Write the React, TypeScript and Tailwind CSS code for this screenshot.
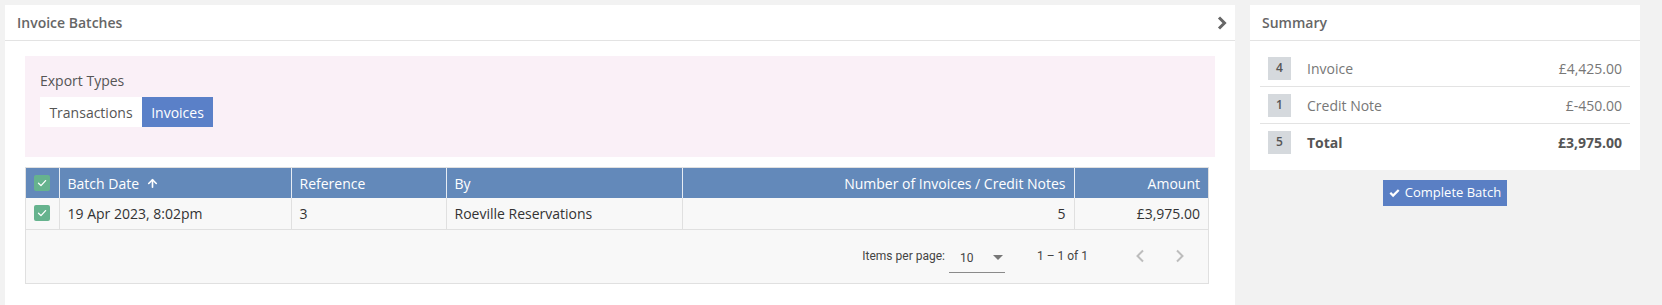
import React from 'react';
import { ArrowUp } from 'lucide-react';

const summaryRows = [
  { count: 4, label: 'Invoice', amount: '£4,425.00' },
  { count: 1, label: 'Credit Note', amount: '£-450.00' },
];

const Check = () => (
  <span className="w-4 h-4 rounded-[2px] bg-[#66b38e] flex items-center justify-center">
    <svg width="12" height="12" viewBox="0 0 12 12" fill="none">
      <path d="M2.5 6.2 L5 8.6 L9.6 3.6" stroke="#fff" strokeWidth="1.3" strokeLinecap="round" strokeLinejoin="round" />
    </svg>
  </span>
);

const App: React.FC = () => {
  return (
    <div className="w-full h-[305px] bg-[#f2f2f2] flex gap-[15px] pl-[5px] pt-[5px] overflow-hidden font-['Open_Sans',sans-serif]">
      {/* Invoice batches panel */}
      <div className="w-[1230px] h-[300px] bg-white flex flex-col shrink-0">
        <div className="h-[36px] border-b border-[#e3e3e3] flex items-center justify-between pl-[12px] pr-[8px]">
          <span className="text-[14px] font-semibold text-[#666]">Invoice Batches</span>
          <svg width="10" height="14" viewBox="0 0 10 14" fill="none">
            <path d="M2 1.5 L7.5 7 L2 12.5" stroke="#666" strokeWidth="3" />
          </svg>
        </div>

        <div className="pl-[20px] pt-[15px]">
          <div className="w-[1190px] h-[101px] bg-[#faf0f7] pl-[15px] pt-[15px]">
            <div className="text-[14px] leading-[20px] text-[#555]">Export Types</div>
            <div className="flex mt-[6px]">
              <button className="w-[102px] h-[30px] bg-white text-[14px] text-[#555]">Transactions</button>
              <button className="w-[71px] h-[30px] bg-[#5a80c8] text-[14px] text-white">Invoices</button>
            </div>
          </div>

          <div className="mt-[10px] w-[1184px] border border-[#e0e0e0] bg-[#f8f8f8] text-[14px]">
            <table className="w-full border-collapse table-fixed">
              <colgroup>
                <col className="w-[33px]" />
                <col className="w-[232px]" />
                <col className="w-[155px]" />
                <col className="w-[236px]" />
                <col className="w-[392px]" />
                <col />
              </colgroup>
              <thead>
                <tr className="h-[30px] bg-[#6389ba] text-white text-left">
                  <th className="font-normal px-0">
                    <div className="flex justify-center"><Check /></div>
                  </th>
                  <th className="font-normal px-[8px] border-l border-[#e6ecf4]">
                    <span className="flex items-center gap-[7px]">Batch Date <ArrowUp size={13} strokeWidth={3} /></span>
                  </th>
                  <th className="font-normal px-[8px] border-l border-[#e6ecf4]">Reference</th>
                  <th className="font-normal px-[8px] border-l border-[#e6ecf4]">By</th>
                  <th className="font-normal px-[8px] border-l border-[#e6ecf4] text-right">Number of Invoices / Credit Notes</th>
                  <th className="font-normal px-[8px] border-l border-[#e6ecf4] text-right">Amount</th>
                </tr>
              </thead>
              <tbody>
                <tr className="h-[31px] text-[#333] border-b border-[#e0e0e0]">
                  <td><div className="flex justify-center"><Check /></div></td>
                  <td className="px-[8px] border-l border-[#e0e0e0]">19 Apr 2023, 8:02pm</td>
                  <td className="px-[8px] border-l border-[#e0e0e0]">3</td>
                  <td className="px-[8px] border-l border-[#e0e0e0]">Roeville Reservations</td>
                  <td className="px-[8px] border-l border-[#e0e0e0] text-right">5</td>
                  <td className="px-[8px] border-l border-[#e0e0e0] text-right">£3,975.00</td>
                </tr>
              </tbody>
            </table>

            {/* Paginator */}
            <div className="h-[53px] flex items-center justify-end pr-[8px] font-['Roboto',sans-serif] text-[12px] text-[#444]">
              <span className="mr-[4px]">Items per page:</span>
              <div className="w-[56px] h-[30px] border-b border-[#8a8a8a] flex items-center justify-between pl-[11px] pr-[1px] mt-[4px]">
                <span className="text-[12px]">10</span>
                <svg width="12" height="6" viewBox="0 0 12 6">
                  <path d="M1 0 L11 0 L6 5 Z" fill="#777" />
                </svg>
              </div>
              <span className="ml-[32px] mr-[32px]">1 – 1 of 1</span>
              <div className="w-[40px] h-[40px] flex items-center justify-center">
                <svg width="10" height="14" viewBox="0 0 10 14" fill="none">
                  <path d="M8 1.5 L2.5 7 L8 12.5" stroke="#bdbdbd" strokeWidth="2" />
                </svg>
              </div>
              <div className="w-[40px] h-[40px] flex items-center justify-center">
                <svg width="10" height="14" viewBox="0 0 10 14" fill="none">
                  <path d="M2 1.5 L7.5 7 L2 12.5" stroke="#bdbdbd" strokeWidth="2" />
                </svg>
              </div>
            </div>
          </div>
        </div>
      </div>

      {/* Summary column */}
      <div className="w-[390px] shrink-0 flex flex-col items-center">
        <div className="w-full bg-white">
          <div className="h-[36px] border-b border-[#e3e3e3] flex items-center pl-[12px]">
            <span className="text-[14px] font-semibold text-[#666]">Summary</span>
          </div>
          <div className="px-[10px] pt-[9px] pb-[10px]">
            {summaryRows.map(r => (
              <div key={r.label} className="h-[37px] border-b border-[#e3e3e3] flex items-center pl-[8px] pr-[8px]">
                <span className="w-[23px] h-[23px] bg-[#d5d9dd] text-[12px] font-semibold text-[#555] flex items-center justify-center">{r.count}</span>
                <span className="ml-[16px] text-[14px] text-[#777]">{r.label}</span>
                <span className="ml-auto text-[14px] text-[#777]">{r.amount}</span>
              </div>
            ))}
            <div className="h-[36px] flex items-center pl-[8px] pr-[8px]">
              <span className="w-[23px] h-[23px] bg-[#d5d9dd] text-[12px] font-semibold text-[#555] flex items-center justify-center">5</span>
              <span className="ml-[16px] text-[14px] font-bold text-[#555]">Total</span>
              <span className="ml-auto text-[14px] font-bold text-[#555]">£3,975.00</span>
            </div>
          </div>
        </div>
        <button className="mt-[10px] w-[124px] h-[26px] bg-[#5a7fc4] text-white text-[13px] flex items-center justify-center gap-[5px]">
          <svg width="11" height="9" viewBox="0 0 11 9">
            <path d="M0.5 4.6 L2.1 3 L4.1 5 L8.9 0.2 L10.5 1.8 L4.1 8.2 Z" fill="#fff" />
          </svg>
          Complete Batch
        </button>
      </div>
    </div>
  );
};

export default App;
